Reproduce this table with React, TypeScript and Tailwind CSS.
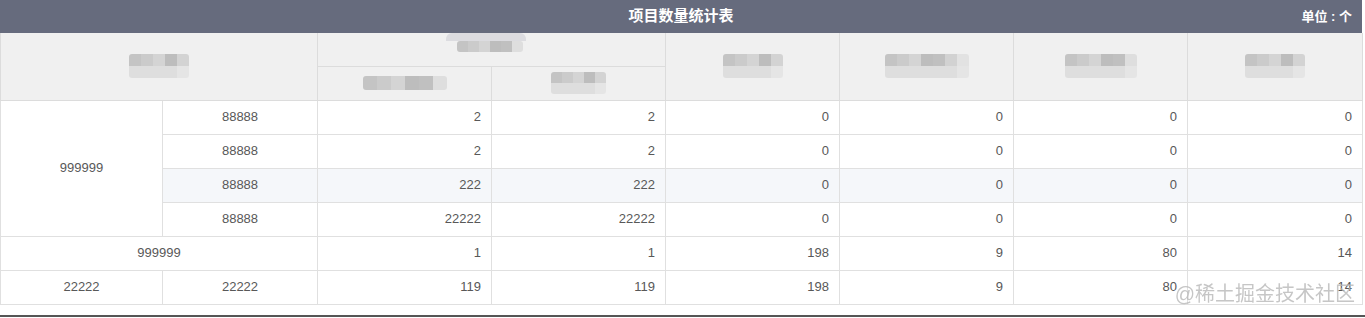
import React from "react";

// pixelated placeholder for the masked header labels
const tones = ["#c4c4c4", "#d2d2d2", "#bdbdbd", "#cbcbcb", "#d9d9d9", "#c0c0c0", "#d4d4d4"];
const Mosaic = ({ cols, rowsN = 2, cell = 12 }: { cols: number; rowsN?: number; cell?: number }) => (
  <div className="mx-auto flex w-fit flex-col rounded-[3px] overflow-hidden blur-[0.6px]">
    {Array.from({ length: rowsN }).map((_, r) => (
      <div key={r} className="flex">
        {Array.from({ length: cols }).map((_, c) => (
          <div
            key={c}
            style={{
              width: cell,
              height: cell,
              background: r === rowsN - 1 && rowsN > 1 ? "#dedede" : tones[(c * 3 + r) % tones.length],
              opacity: c === cols - 1 ? 0.6 : 1,
            }}
          />
        ))}
      </div>
    ))}
  </div>
);

const rows = [
  { sub: "88888", v: ["2", "2", "0", "0", "0", "0"] },
  { sub: "88888", v: ["2", "2", "0", "0", "0", "0"] },
  { sub: "88888", v: ["222", "222", "0", "0", "0", "0"], hover: true },
  { sub: "88888", v: ["22222", "22222", "0", "0", "0", "0"] },
];

const App = () => {
  const td = "border border-[#e0e0e0] h-[34px] px-[10px] text-right";
  const th = "border border-[#dcdcdc] border-t-0";
  return (
    <div className="relative w-[1365px] h-[318px] bg-white font-['Liberation_Sans','Noto_Sans_CJK_SC',sans-serif] text-[13px] text-[#585858]">
      <div className="w-[1362px]">
        <div className="relative flex h-[33px] items-center justify-center bg-[#666b7d] text-white">
          <p className="text-[15px] font-bold">项目数量统计表</p>
          <p className="absolute right-[10px] text-[13px] font-bold">单位 : 个</p>
        </div>
        <table className="w-full table-fixed border-collapse">
          <colgroup>
            <col className="w-[162px]" />
            <col className="w-[155px]" />
            <col className="w-[174px]" />
            <col className="w-[174px]" />
            <col className="w-[174px]" />
            <col className="w-[174px]" />
            <col className="w-[174px]" />
            <col className="w-[175px]" />
          </colgroup>
          <thead className="bg-[#f0f0f0]">
            <tr className="h-[33px]">
              <th colSpan={2} rowSpan={2} className={th}><Mosaic cols={5} /></th>
              <th colSpan={2} className={th + " align-top"}>
                <div className="ml-[128px] flex w-fit flex-col">
                  <div className="h-[8px] w-[80px] rounded-t-md bg-[#dcdce0]" />
                  <div className="ml-[8px]"><Mosaic cols={6} rowsN={1} cell={11} /></div>
                </div>
              </th>
              <th rowSpan={2} className={th}><Mosaic cols={5} /></th>
              <th rowSpan={2} className={th}><Mosaic cols={7} /></th>
              <th rowSpan={2} className={th}><Mosaic cols={6} /></th>
              <th rowSpan={2} className={th}><Mosaic cols={5} /></th>
            </tr>
            <tr className="h-[34px]">
              <th className="border border-[#dcdcdc]"><Mosaic cols={6} rowsN={1} cell={14} /></th>
              <th className="border border-[#dcdcdc]"><Mosaic cols={5} cell={11} /></th>
            </tr>
          </thead>
          <tbody>
            {rows.map((r, i) => (
              <tr key={i} className={r.hover ? "bg-[#f5f7fa]" : ""}>
                {i === 0 && (
                  <td rowSpan={4} className="border border-[#e0e0e0] bg-white text-center">999999</td>
                )}
                <td className="border border-[#e0e0e0] h-[34px] text-center">{r.sub}</td>
                {r.v.map((v, j) => (
                  <td key={j} className={td}>{v}</td>
                ))}
              </tr>
            ))}
            <tr>
              <td colSpan={2} className="border border-[#e0e0e0] h-[34px] text-center">999999</td>
              {["1", "1", "198", "9", "80", "14"].map((v, j) => (
                <td key={j} className={td}>{v}</td>
              ))}
            </tr>
            <tr>
              <td className="border border-[#e0e0e0] h-[34px] text-center">22222</td>
              <td className="border border-[#e0e0e0] h-[34px] text-center">22222</td>
              {["119", "119", "198", "9", "80", "14"].map((v, j) => (
                <td key={j} className={td}>{v}</td>
              ))}
            </tr>
          </tbody>
        </table>
      </div>
      <div className="mt-[10px] h-[2px] w-full bg-[#555]" />
      <p className="absolute right-[10px] top-[279px] text-[20px] text-[#b8b8b8] opacity-80">@稀土掘金技术社区</p>
    </div>
  );
};

export default App;
